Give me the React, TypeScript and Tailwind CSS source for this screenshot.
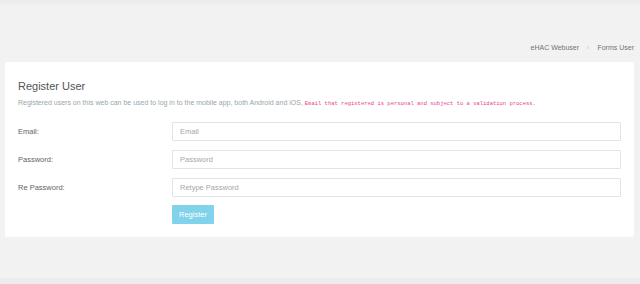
import React from "react";

export default function App() {
  const rows = [
    { label: "Email:", ph: "Email", type: "text" },
    { label: "Password:", ph: "Password", type: "password" },
    { label: "Re Password:", ph: "Retype Password", type: "password" },
  ];
  return (
    <div
      className="w-[640px] h-[284px] bg-[#f2f2f2] flex flex-col overflow-hidden"
      style={{ fontFamily: '"Liberation Sans", Arial, sans-serif' }}
    >
      <div className="h-[6px] bg-gradient-to-b from-[#ebebeb] to-[#f2f2f2]" />
      <div className="h-[56px] flex items-end justify-end pr-[6px] pb-[9px] text-[7px] text-[#6c757d] gap-[8px]">
        <span>eHAC Webuser</span>
        <span className="text-[#c4c4c4]">›</span>
        <span>Forms User</span>
      </div>
      <div className="mx-[5px] w-[629px] h-[175px] bg-white rounded-[2px] px-[13px] pt-[18px]">
        <h4 className="text-[11px] leading-[12px] text-[#505458]">Register User</h4>
        <p className="mt-[6px] text-[7px] leading-[10px] text-[#98a6ad]">
          Registered users on this web can be used to log in to the mobile app, both Android and iOS,{" "}
          <code
            className="text-[5.5px] text-[#e83e8c]"
            style={{ fontFamily: '"Liberation Mono", "DejaVu Sans Mono", monospace' }}
          >
            Email that registered is personal and subject to a validation process.
          </code>
        </p>
        <div className="mt-[13px] flex flex-col gap-[9px]">
          {rows.map((r) => (
            <div key={r.label} className="flex items-center">
              <label className="w-[154px] text-[7.5px] text-[#5f6468]">{r.label}</label>
              <input
                type={r.type}
                placeholder={r.ph}
                className="flex-1 h-[19px] border border-[#e3e3e3] rounded-[1px] px-[7px] text-[7.5px] placeholder:text-[#a3a9ad] outline-none"
              />
            </div>
          ))}
          <div className="flex -mt-[1px]">
            <div className="w-[154px]" />
            <button className="w-[42px] h-[19px] bg-[#81d3eb] text-white text-[7.5px] rounded-[1px]">
              Register
            </button>
          </div>
        </div>
      </div>
      <div className="flex-1" />
      <div className="h-[6px] bg-[#ececec]" />
    </div>
  );
}
